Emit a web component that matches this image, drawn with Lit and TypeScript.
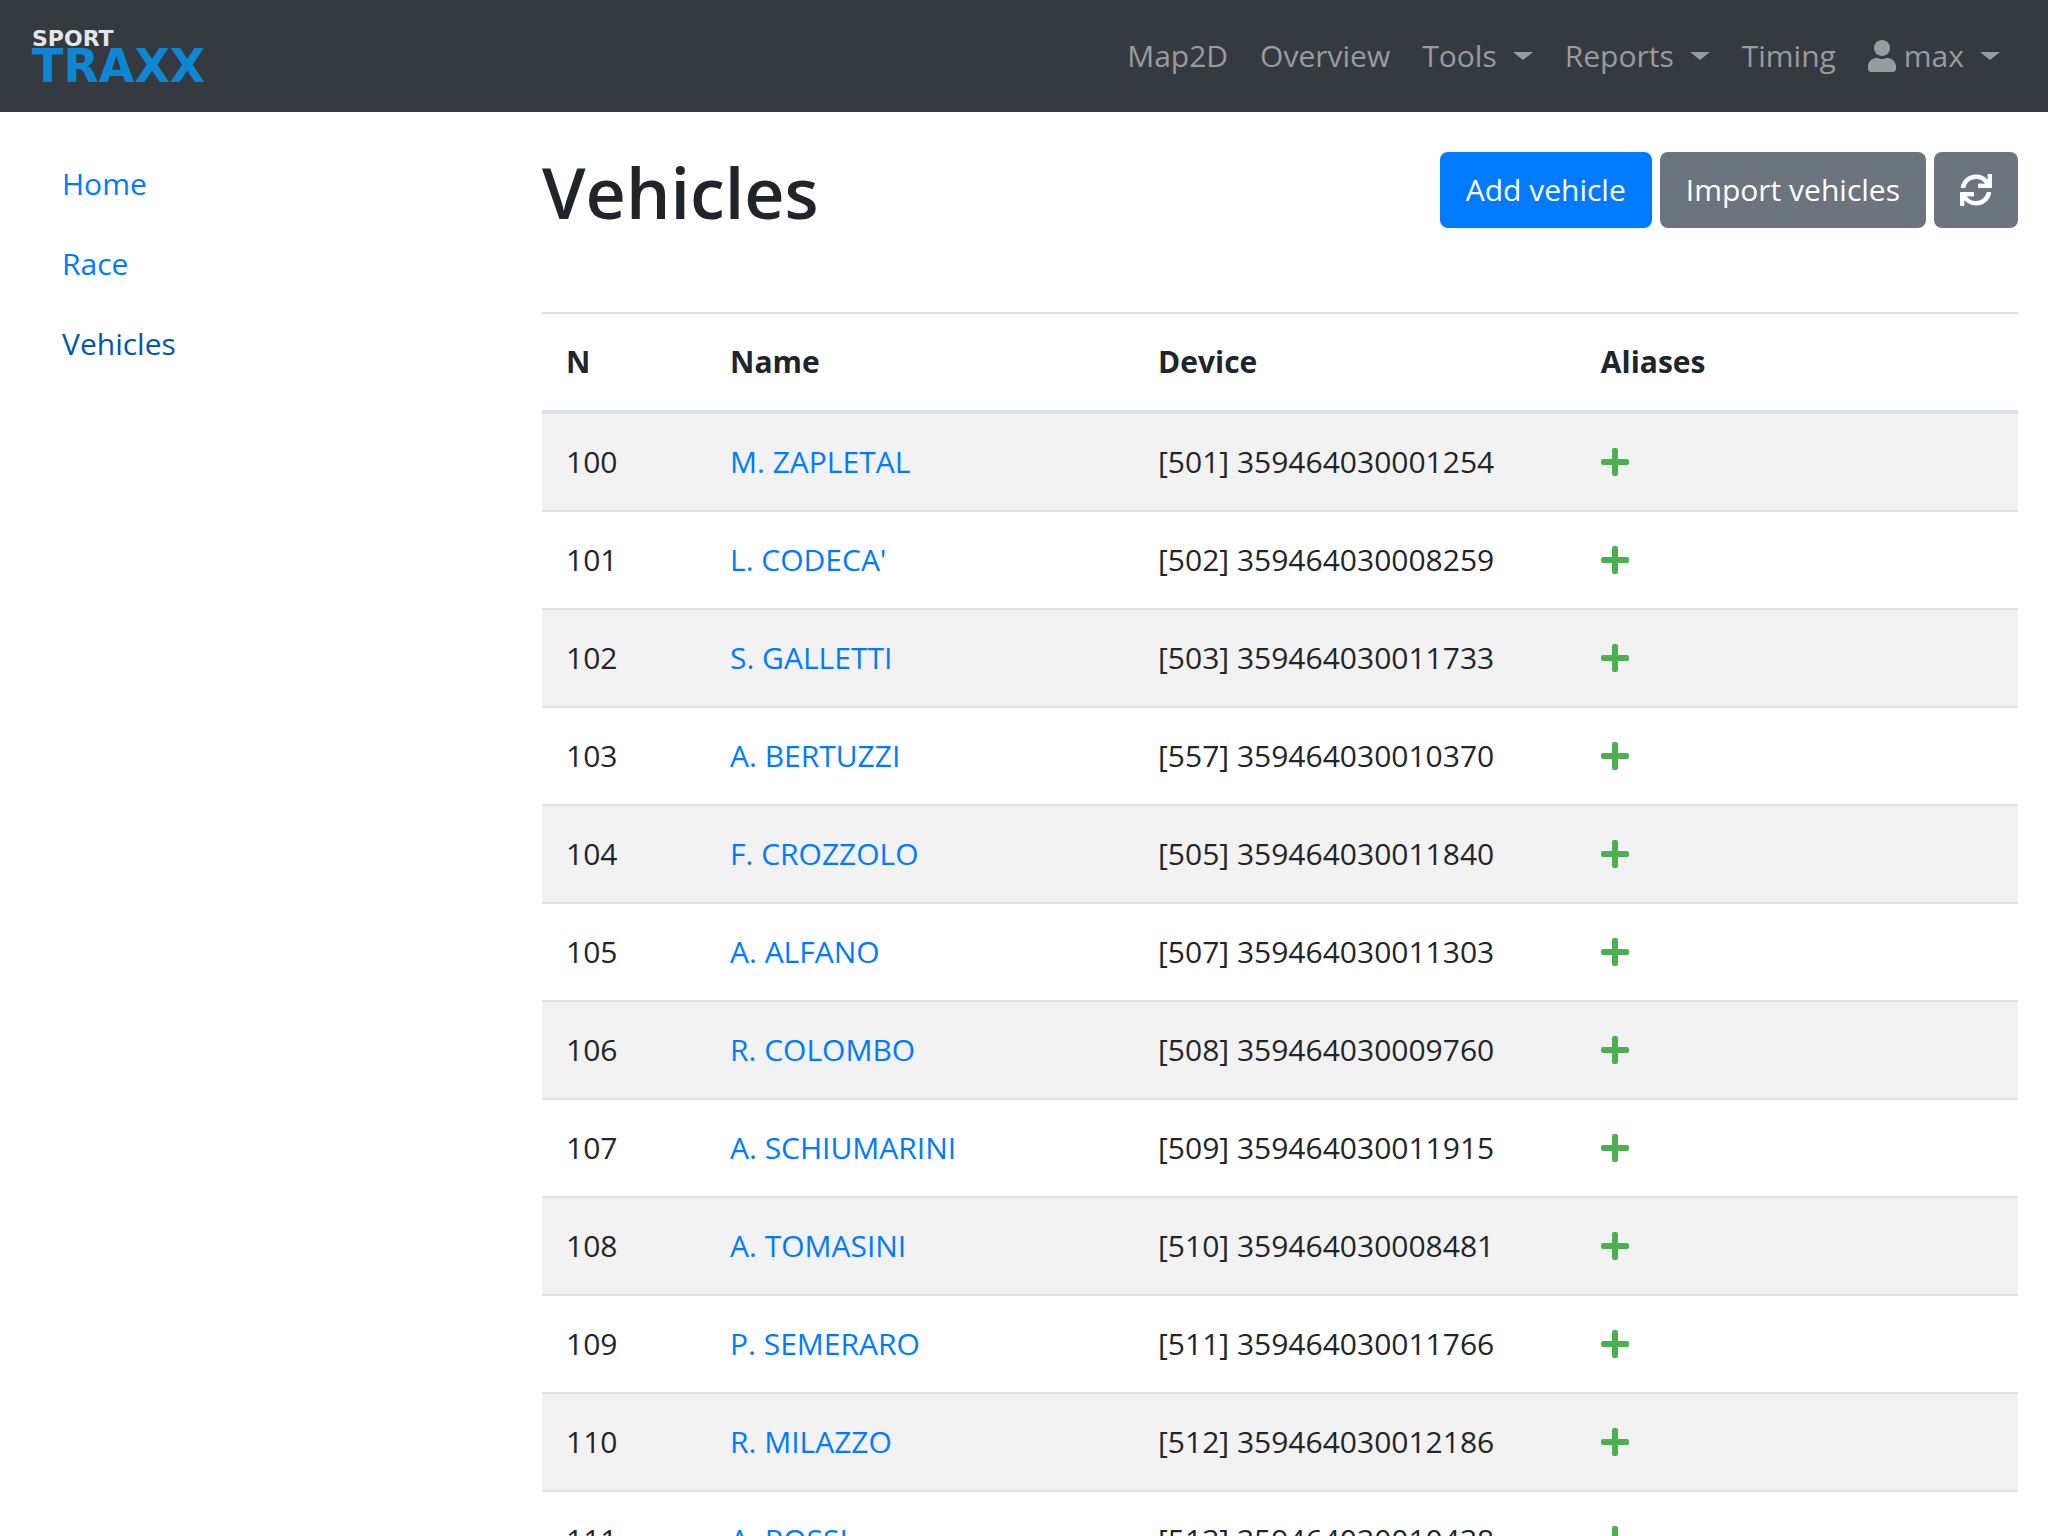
import { LitElement, html, css, svg } from "lit";
import { customElement, state } from "lit/decorators.js";

interface Vehicle {
  number: number;
  name: string;
  device: string;
}

interface NavItem {
  label: string;
  menu?: boolean;
  user?: boolean;
}

const NAV_ITEMS: NavItem[] = [
  { label: "Map2D" },
  { label: "Overview" },
  { label: "Tools", menu: true },
  { label: "Reports", menu: true },
  { label: "Timing" },
  { label: "max", menu: true, user: true },
];

const SIDE_ITEMS = ["Home", "Race", "Vehicles"];

const VEHICLES: Vehicle[] = [
  { number: 100, name: "M. ZAPLETAL", device: "[501] 359464030001254" },
  { number: 101, name: "L. CODECA'", device: "[502] 359464030008259" },
  { number: 102, name: "S. GALLETTI", device: "[503] 359464030011733" },
  { number: 103, name: "A. BERTUZZI", device: "[557] 359464030010370" },
  { number: 104, name: "F. CROZZOLO", device: "[505] 359464030011840" },
  { number: 105, name: "A. ALFANO", device: "[507] 359464030011303" },
  { number: 106, name: "R. COLOMBO", device: "[508] 359464030009760" },
  { number: 107, name: "A. SCHIUMARINI", device: "[509] 359464030011915" },
  { number: 108, name: "A. TOMASINI", device: "[510] 359464030008481" },
  { number: 109, name: "P. SEMERARO", device: "[511] 359464030011766" },
  { number: 110, name: "R. MILAZZO", device: "[512] 359464030012186" },
  { number: 111, name: "A. ROSSI", device: "[513] 359464030010438" },
];

const userIcon = html`<svg class="icon-user" viewBox="0 0 448 512" aria-hidden="true">
  ${svg`<path fill="currentColor" d="M224 256c70.700 0 128-57.300 128-128S294.700 0 224 0 96 57.300 96 128s57.300 128 128 128zm89.600 32h-16.700c-22.200 10.200-46.900 16-72.900 16s-50.600-5.800-72.900-16h-16.700C60.200 288 0 348.200 0 422.400V464c0 26.500 21.500 48 48 48h352c26.500 0 48-21.500 48-48v-41.600c0-74.200-60.200-134.400-134.400-134.400z"/>`}
</svg>`;

const plusIcon = html`<svg class="icon-plus" viewBox="0 0 28 28" aria-hidden="true">
  ${svg`<rect x="11" y="0" width="6" height="28" rx="2" fill="currentColor"/><rect x="0" y="11" width="28" height="6" rx="2" fill="currentColor"/>`}
</svg>`;

const refreshIcon = html`<svg class="icon-refresh" viewBox="0 0 512 512" aria-hidden="true">
  ${svg`<path fill="currentColor" d="M440.650 12.570l4 82.770A247.160 247.160 0 0 0 255.830 8C134.730 8 33.910 94.920 12.290 209.820A12 12 0 0 0 24.090 224h49.050a12 12 0 0 0 11.670-9.260 175.910 175.910 0 0 1 317-56.940l-101.460-4.860a12 12 0 0 0-12.570 12v47.410a12 12 0 0 0 12 12H500a12 12 0 0 0 12-12V12a12 12 0 0 0-12-12h-47.370a12 12 0 0 0-11.980 12.570zM255.830 432a175.610 175.610 0 0 1-146-77.800l101.800 4.870a12 12 0 0 0 12.570-12v-47.400a12 12 0 0 0-12-12H12a12 12 0 0 0-12 12V500a12 12 0 0 0 12 12h47.350a12 12 0 0 0 12-12.600l-4.150-82.570A247.170 247.170 0 0 0 255.830 504c121.110 0 221.930-86.920 243.550-201.820a12 12 0 0 0-11.800-14.180h-49.050a12 12 0 0 0-11.670 9.260A175.860 175.860 0 0 1 255.830 432z"/>`}
</svg>`;

@customElement("app-root")
export class AppRoot extends LitElement {
  @state() private activeSection = "Vehicles";

  static styles = css`
    :host {
      display: block;
      height: 100vh;
      overflow: hidden;
      background: #fff;
      color: #212529;
      font-family: "Open Sans", "Noto Sans", sans-serif;
      font-size: 30px;
      line-height: 48px;
    }
    * {
      box-sizing: border-box;
    }
    a {
      color: #007bff;
      text-decoration: none;
    }
    .navbar {
      display: flex;
      align-items: center;
      justify-content: space-between;
      padding: 16px 32px;
      background: #343a40;
    }
    .brand {
      display: flex;
      flex-direction: column;
      font-family: "DejaVu Sans", sans-serif;
      font-weight: 700;
    }
    .brand-top {
      color: #e4e6e8;
      font-size: 22px;
      line-height: 20px;
    }
    .brand-main {
      color: #0f86d4;
      font-size: 46px;
      line-height: 34px;
    }
    .menu {
      display: flex;
      margin: 0;
      padding: 0;
      list-style: none;
    }
    .menu-link {
      display: flex;
      align-items: center;
      padding: 16px;
      color: #999c9f;
    }
    .caret {
      margin-left: 16px;
      border: 10px solid transparent;
      border-top: 8px solid currentColor;
      border-bottom: 0;
    }
    .icon-user {
      width: 28px;
      height: 32px;
      margin-right: 8px;
    }
    .layout {
      display: grid;
      grid-template-columns: 1fr 3fr;
    }
    .side {
      display: flex;
      flex-direction: column;
      padding: 32px 30px;
    }
    .side-link {
      padding: 16px 32px;
    }
    .side-link.active {
      color: #0056b3;
    }
    .content {
      min-width: 0;
      padding: 40px 30px 0;
    }
    .heading {
      display: flex;
      align-items: flex-start;
      justify-content: space-between;
      margin-bottom: 80px;
    }
    .title {
      margin: 0;
      font-size: 70px;
      font-weight: 600;
      line-height: 80px;
    }
    .actions {
      display: flex;
      gap: 8px;
    }
    .btn {
      display: flex;
      align-items: center;
      padding: 14px 26px;
      border: 0;
      border-radius: 8px;
      background: #6c757d;
      color: #fff;
      font: inherit;
    }
    .btn.primary {
      background: #007bff;
    }
    .icon-refresh {
      width: 32px;
      height: 32px;
    }
    .vehicles {
      width: 100%;
      table-layout: fixed;
      border-collapse: separate;
      border-spacing: 0;
      border-top: 2px solid #dee2e6;
    }
    .col-number {
      width: 164px;
    }
    .col-name {
      width: 29%;
    }
    .col-device {
      width: 30%;
    }
    .head-cell,
    .cell {
      padding: 24px;
      text-align: left;
      white-space: nowrap;
    }
    .head-cell {
      border-bottom: 4px solid #dee2e6;
      font-weight: 700;
    }
    .cell {
      border-bottom: 2px solid #dee2e6;
    }
    .row:nth-child(odd) {
      background: #f2f2f2;
    }
    .add-alias {
      display: flex;
      align-items: center;
      height: 48px;
      padding: 0;
      border: 0;
      background: none;
      color: #4caf50;
    }
    .icon-plus {
      width: 28px;
      height: 28px;
    }
  `;

  private renderNavItem(item: NavItem) {
    return html`<li>
      <a class="menu-link" href="#">
        ${item.user ? userIcon : null}<span>${item.label}</span>${item.menu
          ? html`<span class="caret"></span>`
          : null}
      </a>
    </li>`;
  }

  private renderRow(vehicle: Vehicle) {
    return html`<tr class="row">
      <td class="cell">${vehicle.number}</td>
      <td class="cell"><a href="#">${vehicle.name}</a></td>
      <td class="cell">${vehicle.device}</td>
      <td class="cell">
        <button class="add-alias" type="button" aria-label="Add alias">${plusIcon}</button>
      </td>
    </tr>`;
  }

  render() {
    return html`
      <header class="navbar">
        <a class="brand" href="#">
          <span class="brand-top">SPORT</span>
          <span class="brand-main">TRAXX</span>
        </a>
        <nav>
          <ul class="menu">
            ${NAV_ITEMS.map((item) => this.renderNavItem(item))}
          </ul>
        </nav>
      </header>
      <div class="layout">
        <nav class="side">
          ${SIDE_ITEMS.map(
            (label) => html`<a
              class="side-link ${label === this.activeSection ? "active" : ""}"
              href="#"
              @click=${() => (this.activeSection = label)}
              >${label}</a
            >`,
          )}
        </nav>
        <main class="content">
          <div class="heading">
            <h1 class="title">Vehicles</h1>
            <div class="actions">
              <button class="btn primary" type="button">Add vehicle</button>
              <button class="btn" type="button">Import vehicles</button>
              <button class="btn" type="button" aria-label="Refresh">${refreshIcon}</button>
            </div>
          </div>
          <table class="vehicles">
            <colgroup>
              <col class="col-number" />
              <col class="col-name" />
              <col class="col-device" />
              <col />
            </colgroup>
            <thead>
              <tr>
                <th class="head-cell" scope="col">N</th>
                <th class="head-cell" scope="col">Name</th>
                <th class="head-cell" scope="col">Device</th>
                <th class="head-cell" scope="col">Aliases</th>
              </tr>
            </thead>
            <tbody>
              ${VEHICLES.map((vehicle) => this.renderRow(vehicle))}
            </tbody>
          </table>
        </main>
      </div>
    `;
  }
}
